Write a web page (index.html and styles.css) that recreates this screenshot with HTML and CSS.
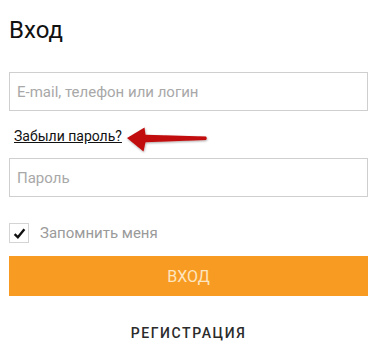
FILE: index.html
```html
<!DOCTYPE html>
<html lang="ru">
<head>
  <meta charset="UTF-8" />
  <meta name="viewport" content="width=device-width, initial-scale=1.0" />
  <title>Вход</title>
  <link rel="stylesheet" href="styles.css">
</head>
<body>
  <main class="login">
    <h1>Вход</h1>

    <form class="login-form">
      <input class="field" type="text" placeholder="E-mail, телефон или логин">

      <div class="forgot-row">
        <a href="#" class="forgot">Забыли пароль?</a>
        <!-- стрелка-подсказка -->
        <svg class="arrow" width="86" height="30" viewBox="0 0 86 30">
          <defs>
            <filter id="sh" x="-20%" y="-40%" width="140%" height="180%">
              <feDropShadow dx="0.5" dy="1" stdDeviation="1.2" flood-color="#000" flood-opacity="0.35"/>
            </filter>
          </defs>
          <path filter="url(#sh)" fill="#c10a0a"
                d="M2 13 L19.5 2.5 L20.5 9.8 L81 11.5 Q82.8 13.2 81 15 L20.5 17.3 L18.5 26.5 Z"/>
        </svg>
      </div>

      <input class="field" type="password" placeholder="Пароль">

      <label class="remember">
        <span class="box">
          <svg width="13" height="13" viewBox="0 0 12 12"><path d="M1.5 6.5 L4.5 9.5 L10.5 2" fill="none" stroke="#111" stroke-width="2.2"/></svg>
        </span>
        Запомнить меня
      </label>

      <button type="button" class="submit">ВХОД</button>
      <button type="button" class="register">РЕГИСТРАЦИЯ</button>
    </form>
  </main>
</body>
</html>
```

FILE: styles.css
```css
body {
  font-family: Roboto, "Noto Sans", sans-serif;
  margin: 0;
  padding: 0;
  background: #fff;
}

.login {
  padding: 0 8px 0 9px;
}

h1 {
  margin: 0;
  padding-top: 16px;
  font-size: 24px;
  font-weight: 400;
  line-height: 28px;
  color: #111;
}

.login-form {
  display: flex;
  flex-direction: column;
  margin-top: 28px;
}

.field {
  box-sizing: border-box;
  height: 39px;
  width: 100%;
  border: 1px solid #cfcfcf;
  padding: 0 7px;
  font-family: inherit;
  font-size: 15px;
  color: #333;
  outline: none;
}

.field::placeholder {
  color: #a8a8a8;
}

.forgot-row {
  display: flex;
  align-items: center;
  height: 47px;
  padding-left: 5px;
}

.forgot {
  color: #111;
  font-size: 14px;
  text-decoration: underline;
  margin-top: 2px;
}

.arrow {
  align-self: flex-start;
  margin-left: 3px;
  margin-top: 14px;
}

.remember {
  display: flex;
  align-items: center;
  margin-top: 26px;
  height: 20px;
  color: #9a9a9a;
  font-size: 15px;
}

.box {
  box-sizing: border-box;
  width: 20px;
  height: 20px;
  border: 1px solid #d4d4d4;
  display: flex;
  align-items: center;
  justify-content: center;
  margin-right: 11px;
}

.submit {
  margin-top: 13px;
  height: 40px;
  border: none;
  background: #f89b23;
  color: #fde6bf;
  font-family: inherit;
  font-size: 16px;
  cursor: pointer;
}

.register {
  margin-top: 25px;
  border: none;
  background: none;
  font-family: inherit;
  font-size: 14px;
  font-weight: 500;
  letter-spacing: 1.6px;
  color: #2b2b2b;
  cursor: pointer;
  padding: 4px 0;
}
```
